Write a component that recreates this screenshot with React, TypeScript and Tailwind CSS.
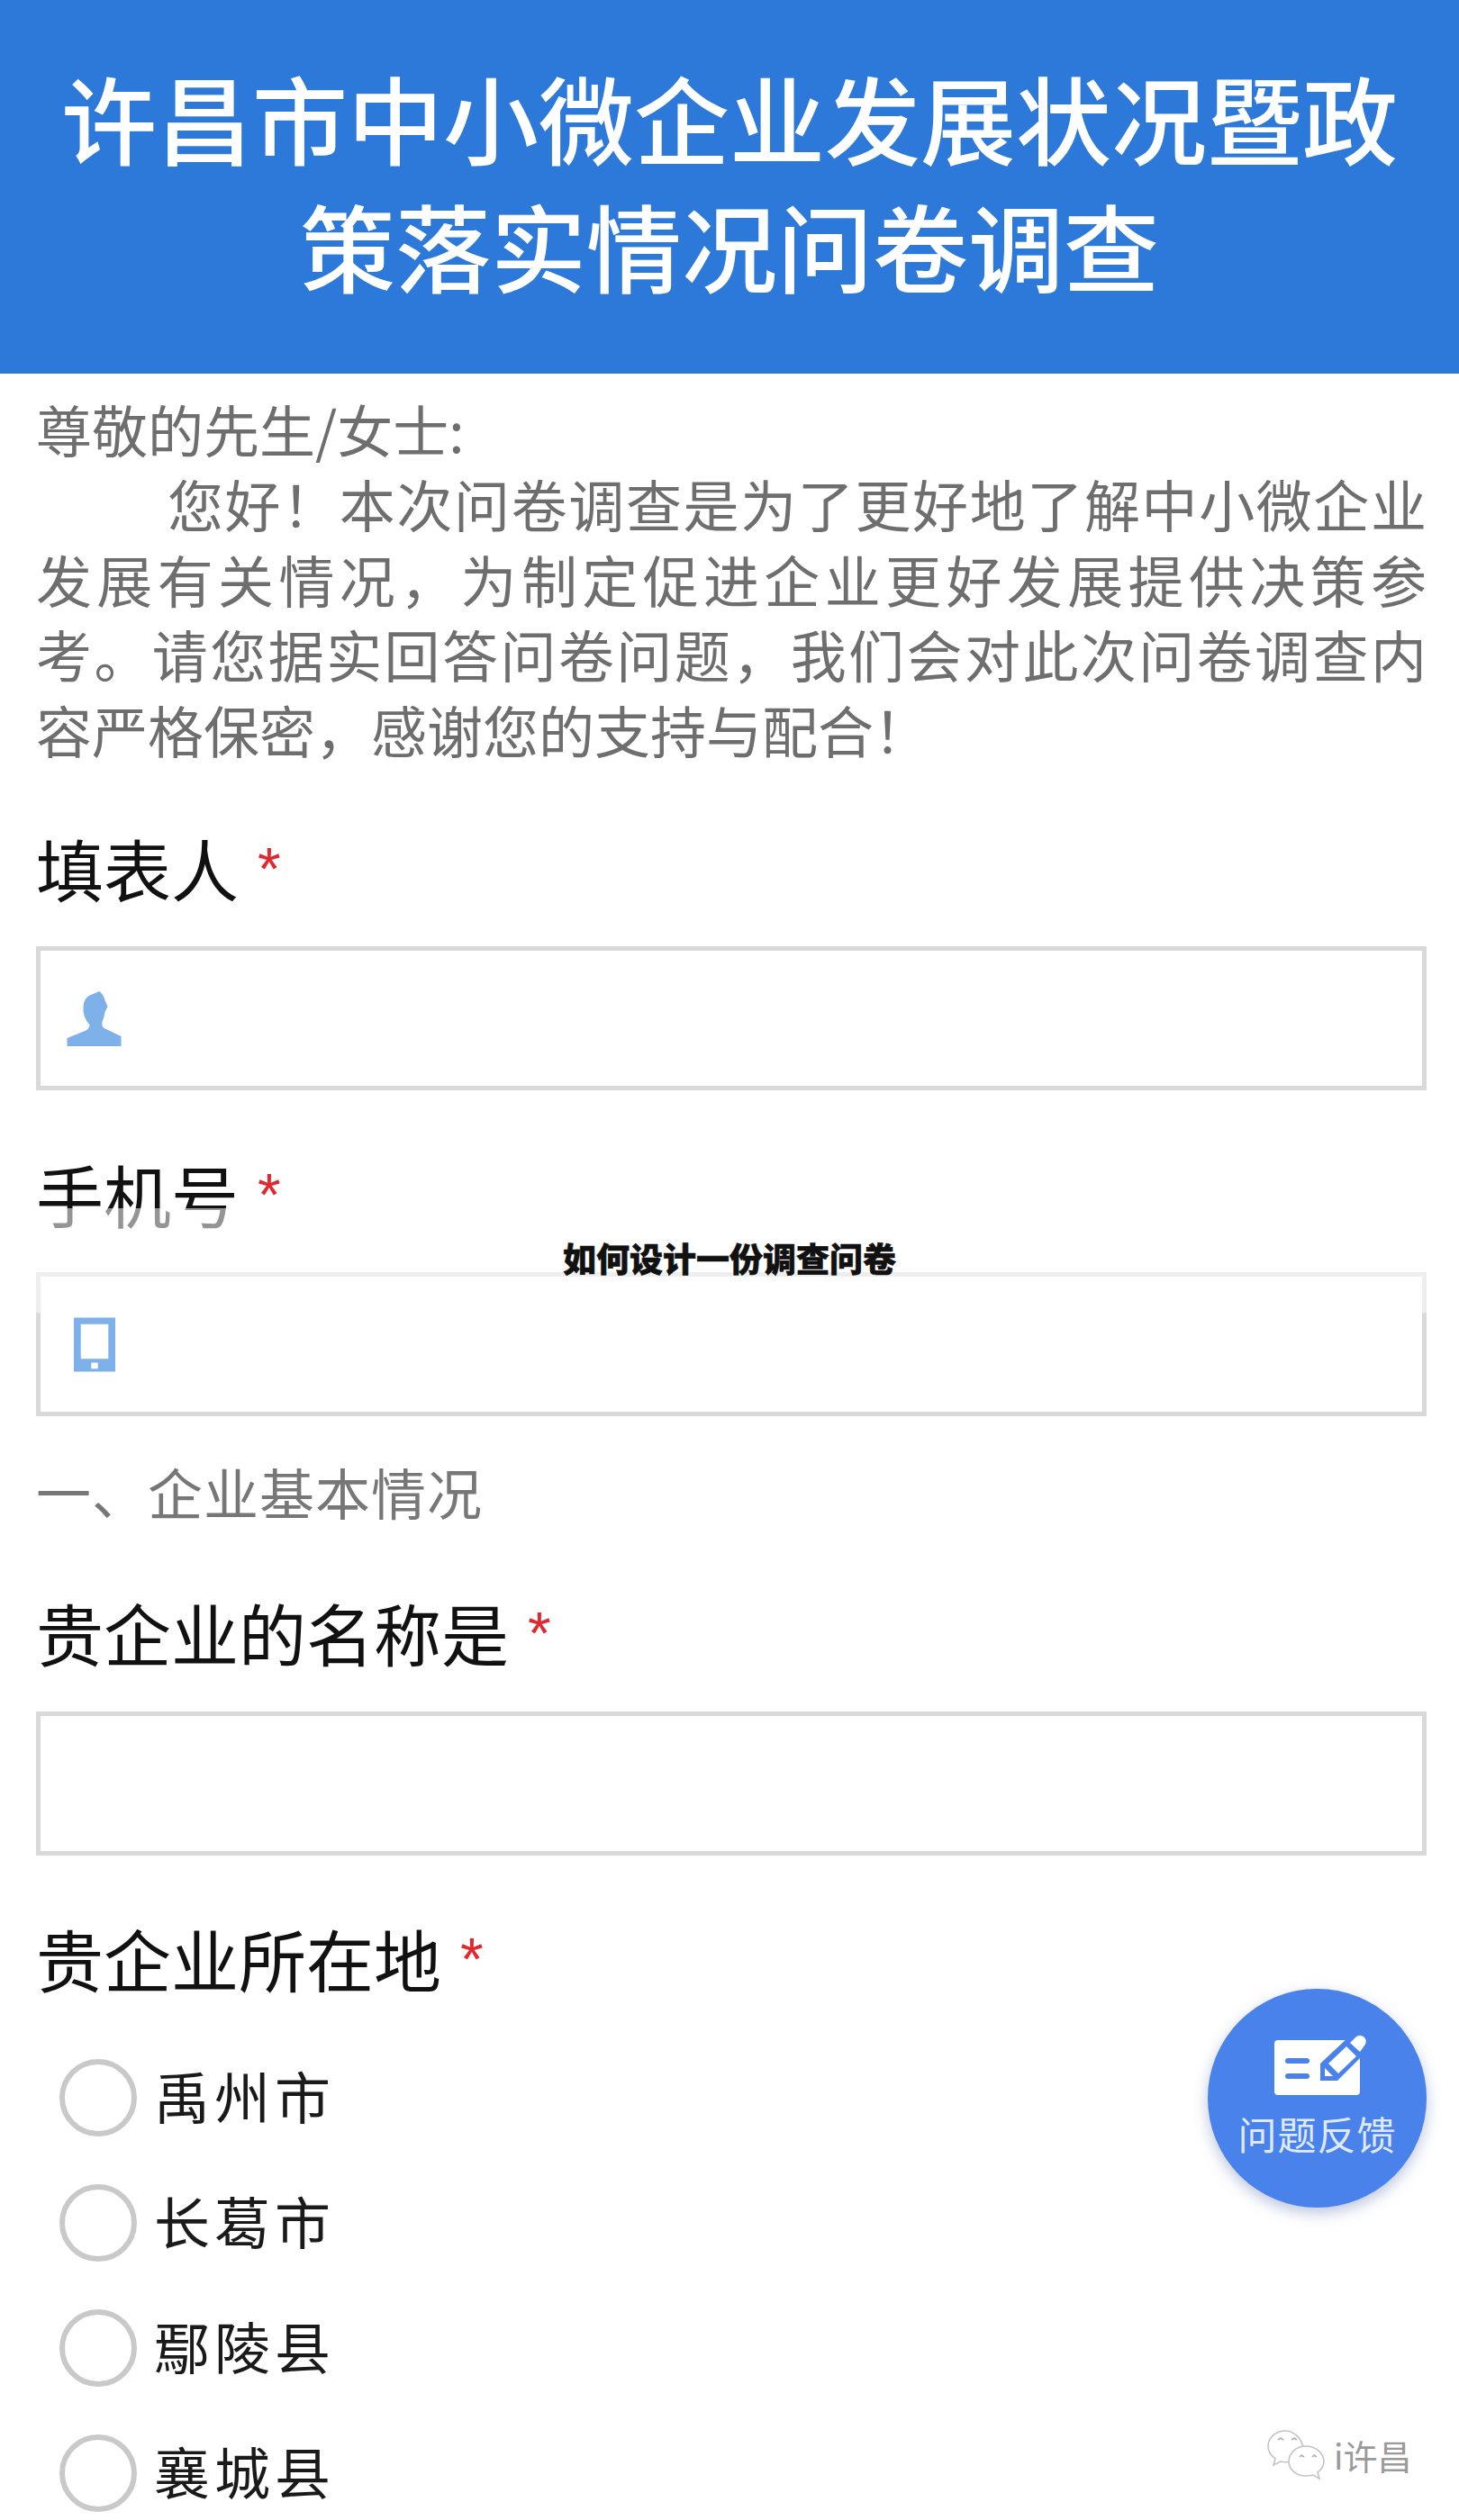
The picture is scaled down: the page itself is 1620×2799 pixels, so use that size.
const intro = [
  '您好！本次问卷调查是为了更好地了解中小微企业',
  '发展有关情况，为制定促进企业更好发展提供决策参',
  '考。请您据实回答问卷问题，我们会对此次问卷调查内',
];

const towns = ['禹州市', '长葛市', '鄢陵县', '襄城县'];

function Label({ text, className }: { text: string; className: string }) {
  return (
    <div className={`flex h-[90px] items-center pb-[8px] text-[75px] leading-[90px] text-[#111] ${className}`}>
      <span>{text}</span>
      <span className="ml-[21px] mt-[2px] font-['Liberation_Sans',sans-serif] text-[66px] leading-[60px] text-[#e0282e]">*</span>
    </div>
  );
}

function UserIcon() {
  return (
    <svg width="61" height="61" viewBox="0 0 60 61" className="block">
      <path
        d="M0 61V52L20 44Q25 42 25 37Q19 31 18 22Q17 10 24 5L36 0Q41 5 42 10L45 17L42 23Q41 30 39 34Q38 39 41 41L60 50V61Z"
        fill="#7eb0e9"
      />
    </svg>
  );
}

function PhoneIcon() {
  return (
    <svg width="46" height="61" viewBox="0 0 46 60" className="block">
      <path
        fillRule="evenodd"
        d="M0 0H46V60H0ZM7.7 7.3V45.7H38.3V7.3ZM19.3 50V56.7H26.7V50Z"
        fill="#7eb0e9"
      />
    </svg>
  );
}

function FeedbackIcon() {
  return (
    <svg width="105" height="72" viewBox="0 0 105 72" className="block">
      <rect x="0" y="10" width="95" height="61" rx="4" fill="#fff" />
      <path d="M15 33H36M15 50H36" stroke="#4a82ec" strokeWidth="6" strokeLinecap="round" />
      <path d="M51 55V36L83 6L103 22L70 55Z" fill="#4a82ec" />
      <path d="M60 36L80 17L91 28L71 47Z" fill="#fff" />
      <path d="M56 41V50H65Z" fill="#fff" />
      <path d="M84 13L90 7A6 6 0 0 1 100 16L95 23Z" fill="#fff" />
    </svg>
  );
}

function WechatMark() {
  return (
    <svg width="64" height="56" viewBox="0 0 64 56" className="block" fill="#fff" stroke="#c4c4c4" strokeWidth="1.6">
      <path d="M20 1C9 1 1 9 1 18C1 24 5 29 9 32L7 39L15 35C18 36 22 36 26 35L40 20C38 9 30 1 20 1Z" />
      <path d="M43 18C32 18 24 26 24 35C24 44 32 51 43 51C46 51 48 51 51 50L58 54L56 47C60 44 63 40 63 35C63 26 54 18 43 18Z" />
      <path d="M12 11L15 9L18 11M27 11L30 9L33 11M36 30L38 28L41 30M50 30L52 28L55 30" fill="none" stroke="#b0b0b0" />
    </svg>
  );
}

export default function App() {
  return (
    <div className="relative h-[2799px] overflow-hidden bg-white font-['Noto_Sans_CJK_SC',sans-serif]">
      {/* Header */}
      <div className="flex h-[415px] flex-col items-center justify-center bg-[#2c79d9] pb-[16px] text-[106px] font-medium leading-[142px] text-white">
        <div>许昌市中小微企业发展状况暨政</div>
        <div>策落实情况问卷调查</div>
      </div>

      <div className="pl-[40px] pr-[36px]">
        {/* Intro */}
        <div className="mt-[20px] text-[62px] leading-[83.4px] text-[#6e6e6e]">
          <div>尊敬的先生/女士:</div>
          {intro.map((line, i) => (
            <div key={line} className={`text-justify [text-align-last:justify] ${i === 0 ? 'pl-[146px]' : ''}`}>
              {line}
            </div>
          ))}
          <div>容严格保密，感谢您的支持与配合！</div>
        </div>

        {/* Contact fields */}
        <Label text="填表人" className="mt-[71px]" />
        <div className="mt-[38px] flex h-[160px] items-center border-[5px] border-[#d9d9d9] pl-[29px]">
          <UserIcon />
        </div>

        <Label text="手机号" className="mt-[74px]" />
        <div className="mt-[38px] flex h-[160px] items-center border-[5px] border-[#d9d9d9] pl-[37px]">
          <PhoneIcon />
        </div>

        <div className="mt-[42px] text-[61px] leading-[83px] tracking-[1px] text-[#777]">一、企业基本情况</div>

        <Label text="贵企业的名称是" className="mt-[74px]" />
        <div className="mt-[39px] h-[160px] border-[5px] border-[#d9d9d9]" />

        <Label text="贵企业所在地" className="mt-[73px]" />

        {/* Town options */}
        <div className="ml-[26px] mt-[63px] flex flex-col gap-[53px]">
          {towns.map((town) => (
            <div key={town} className="flex h-[86px] items-center gap-[19px]">
              <div className="h-[86px] w-[86px] rounded-full border-[6px] border-[#c9c9c9]" />
              <span className="mt-[-6px] text-[62px] leading-[86px] tracking-[5px] text-[#1a1a1a]">{town}</span>
            </div>
          ))}
        </div>
      </div>

      {/* Article title band over the page */}
      <div className="absolute left-0 top-[1342px] h-[116px] w-full bg-white/55 pt-[37px] text-center text-[37px] font-black leading-[37px] text-[#111] [-webkit-text-stroke:0.6px_#111]">
        如何设计一份调查问卷
      </div>

      {/* Feedback button */}
      <div className="absolute left-[1341px] top-[2209px] flex h-[243px] w-[243px] flex-col items-center rounded-full bg-[#4a82ec] pt-[47px] pl-[10px] shadow-[0_6px_16px_rgba(60,90,160,0.35)]">
        <FeedbackIcon />
        <div className="ml-[-10px] mt-[16px] text-[43px] leading-[50px] tracking-[1px] text-[#dfe9fb]">问题反馈</div>
      </div>

      {/* Watermark */}
      <div className="absolute left-[1407px] top-[2699px] flex items-center gap-[10px]">
        <WechatMark />
        <span className="text-[38px] leading-[40px] text-[#9a9a9a]">i许昌</span>
      </div>
    </div>
  );
}
